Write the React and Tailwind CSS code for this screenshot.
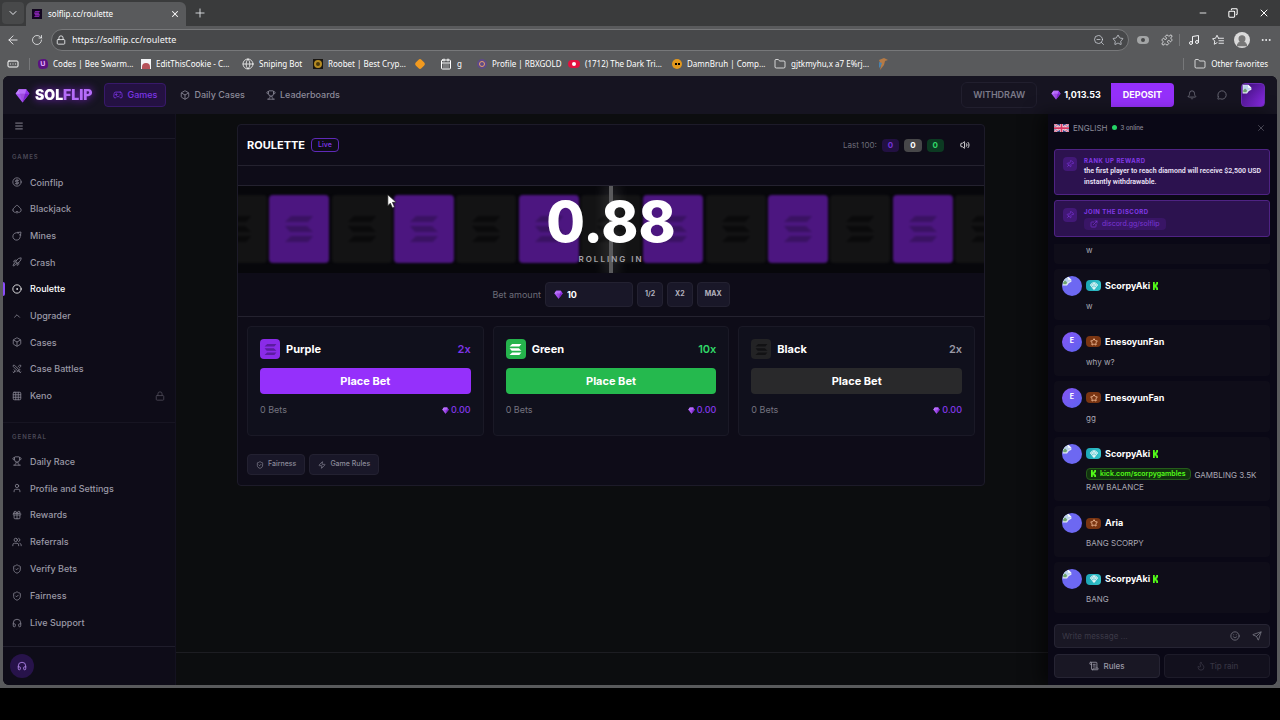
import React from "react";
import {
  ArrowLeft, RotateCw, Lock, ChevronDown, Plus, X, Minus, Copy, ZoomOut, Star, Puzzle, Music, Ellipsis,
  Globe, Folder, Gamepad2, Box, Trophy, Bell, MessageCircle, Menu, CircleDollarSign, Spade, Rocket,
  CircleDot, ChevronUp, Swords, Grid3x3, User, Gift, Users, ShieldCheck, Headphones, Volume2, Zap,
  Smile, Send, ScrollText, Flame, Pin, ExternalLink, Gem, UserRound, CalendarDays, RectangleEllipsis,
} from "lucide-react";

function GemMark({ className }) {
  return (
    <svg viewBox="0 0 24 24" className={className} aria-hidden="true">
      <path d="M6 2h12l5 7-11 14L1 9z" fill="#a855f7" />
      <path d="M6 2l2 7H1z" fill="#c084fc" />
      <path d="M18 2l-2 7h7z" fill="#9333ea" />
      <path d="M6 2h12l-2 7H8z" fill="#b76cf9" />
      <path d="M8 9h8l-4 14z" fill="#9d4edd" />
      <path d="M16 9h7L12 23z" fill="#7e22ce" />
    </svg>
  );
}

function Bars({ className }) {
  return (
    <svg viewBox="0 0 28 26" className={className} fill="currentColor" aria-hidden="true">
      <path d="M6 0h22l-5 6H0z" />
      <path d="M0 10h22l6 6H5z" />
      <path d="M6 20h22l-5 6H0z" />
    </svg>
  );
}

function Mine({ className, strokeWidth }) {
  return (
    <svg viewBox="0 0 24 24" className={className} fill="none" stroke="currentColor" strokeWidth={strokeWidth} strokeLinecap="round" strokeLinejoin="round" aria-hidden="true">
      <path d="M14.500 4.600A9 9 0 1 0 19.400 9.500" />
      <path d="M14 3.500 21.500 2.500 20.500 10" />
      <path d="M14 3.500l2 1.500M20.500 10l-1.500-2" />
    </svg>
  );
}

function StarList({ className }) {
  return (
    <svg viewBox="0 0 24 24" className={className} fill="none" stroke="currentColor" strokeWidth="1.800" strokeLinecap="round" strokeLinejoin="round" aria-hidden="true">
      <path d="M13 8.500 10 2.500 7 8.500l-6 1 4.500 4.500-1 6.500L10 17.500" />
      <path d="M13 8.500h10M14 13.500h9M14 18.500h9" />
    </svg>
  );
}

function BrokenImage({ className }) {
  return (
    <svg viewBox="0 0 16 16" className={className} aria-hidden="true">
      <path d="M1 1h9l5 5v3l-4 2-3 4H1z" fill="#e8edf5" />
      <path d="M2 2h8v3h4v3l-4 2-2 3H2z" fill="#bcd2ee" />
      <path d="M2 13V10l3-3 3 3-1 3z" fill="#6fa66a" />
      <path d="M10 1v5h5z" fill="#ffffff" />
    </svg>
  );
}

function Kick({ className }) {
  return (
    <svg viewBox="0 0 14 16" className={className} fill="#53fc18" preserveAspectRatio="none" aria-hidden="true">
      <path d="M0 0h5v5h2V3h2V0h5v5h-2v2h-2v2h2v2h2v5H9v-3H7v-2H5v5H0z" />
    </svg>
  );
}

function Flag({ className }) {
  return (
    <svg viewBox="0 0 30 16" className={className} aria-hidden="true">
      <rect width="30" height="16" fill="#3b4a8c" />
      <path d="M0 0l30 16M30 0L0 16" stroke="#f1dfe8" strokeWidth="4" />
      <path d="M0 0l30 16M30 0L0 16" stroke="#d8345f" strokeWidth="1.500" />
      <path d="M15 0v16M0 8h30" stroke="#f1dfe8" strokeWidth="6" />
      <path d="M15 0v16M0 8h30" stroke="#d8345f" strokeWidth="3.500" />
    </svg>
  );
}

function Divider() {
  return <span className="h-3 w-px bg-[#77787a]" />;
}

function TabStrip() {
  return (
    <div className="flex h-[26px] items-end bg-[#3a3b3c] pr-1">
      <button aria-label="Tab list" className="mb-0.5 ml-0.5 flex h-[22px] w-[22px] items-center justify-center rounded bg-[#48494a] text-gray-200">
        <ChevronDown className="size-3" strokeWidth={2} />
      </button>
      <div className="ml-0.5 flex h-6 w-40 items-center rounded-t-md bg-[#595a5c] px-1.5 text-white">
        <span className="flex size-2.5 items-center justify-center bg-[#12061f] text-[#a32bd6]">
          <Bars className="size-1.5" />
        </span>
        <span className="ml-1.5 text-[8px]">solflip.cc/roulette</span>
        <button aria-label="Close tab" className="ml-auto">
          <X className="size-2.5" strokeWidth={2.5} />
        </button>
      </div>
      <button aria-label="New tab" className="mb-1.5 ml-[7px] text-gray-200">
        <Plus className="size-3.5" strokeWidth={1.5} />
      </button>
      <div className="mb-[7px] ml-auto flex items-center gap-5 pr-1.5 text-white">
        <button aria-label="Minimize"><Minus className="size-2.5" strokeWidth={2} /></button>
        <button aria-label="Restore"><Copy className="size-2.5 -scale-x-100" strokeWidth={2.5} /></button>
        <button aria-label="Close window"><X className="size-3" strokeWidth={2} /></button>
      </div>
    </div>
  );
}

function Toolbar() {
  return (
    <div className="flex h-7 items-center bg-[#595a5c] pl-1.5 pr-2 text-gray-100">
      <button aria-label="Back"><ArrowLeft className="size-3.5" strokeWidth={1.5} /></button>
      <button aria-label="Reload" className="ml-[11px]"><RotateCw className="size-3" strokeWidth={1.5} /></button>
      <div className="ml-2 flex h-[22px] flex-1 items-center rounded-full border border-[#77787a] bg-[#47484a] px-1">
        <Lock className="size-2.5" strokeWidth={2} />
        <input aria-label="Address" defaultValue="https://solflip.cc/roulette" className="ml-1.5 min-w-0 flex-1 bg-transparent text-[9px] text-gray-100 outline-none" />
        <ZoomOut className="size-3 text-gray-300" strokeWidth={1.5} />
        <Star className="ml-[7px] size-3 text-gray-300" strokeWidth={1.5} />
      </div>
      <span className="ml-2 flex h-2 w-3 items-center rounded-full bg-[#a3a5a6] px-1"><span className="size-1 rounded-full bg-[#47484a]" /></span>
      <button aria-label="Extensions" className="ml-3"><Puzzle className="size-3" strokeWidth={1.5} /></button>
      <span className="ml-1.5 mr-2 flex"><Divider /></span>
      <button aria-label="Media"><Music className="size-3" strokeWidth={2} /></button>
      <button aria-label="Favorites" className="ml-3"><StarList className="size-3" /></button>
      <span className="ml-2.5 flex size-4 items-end justify-center overflow-hidden rounded-full bg-[#dadada] text-[#777]"><UserRound className="size-3.5" fill="currentColor" /></span>
      <button aria-label="Settings" className="ml-2.5"><Ellipsis className="size-3" strokeWidth={2} /></button>
    </div>
  );
}

function Bookmark({ icon, label, className }) {
  return (
    <a href="#" className={`flex shrink-0 items-center gap-[5px] whitespace-nowrap ${className}`}>
      {icon}
      {label && <span>{label}</span>}
    </a>
  );
}

function Bookmarks() {
  return (
    <div className="flex h-[22px] items-center bg-[#595a5c] pb-0.5 pl-[7px] pr-3 text-[8px] text-white">
      <RectangleEllipsis className="size-3" strokeWidth={2} />
      <span className="ml-2.5 flex"><Divider /></span>
      <Bookmark className="ml-2 w-[103px]" label="Codes | Bee Swarm..." icon={<span className="flex size-2.5 -rotate-6 items-center justify-center rounded-sm bg-[#5b1182] text-[7px] font-bold text-[#e6b2ff]">U</span>} />
      <Bookmark className="w-[101px]" label="EditThisCookie - C..." icon={<span className="flex size-2.5 items-end justify-center bg-gray-100"><span className="h-1.5 w-2 rounded-t-full bg-[#b5525a]" /></span>} />
      <Bookmark className="w-[71px]" label="Sniping Bot" icon={<Globe className="size-3" strokeWidth={1.5} />} />
      <Bookmark className="w-[103px]" label="Roobet | Best Cryp..." icon={<span className="flex size-2.5 items-center justify-center bg-[#191611]"><span className="size-2 rounded-full border-2 border-[#b58b22] bg-[#4a390b]" /></span>} />
      <Bookmark className="w-6" icon={<span className="size-2 rotate-45 rounded-xs bg-[#f29a1f]" />} />
      <Bookmark className="w-[37px]" label="g" icon={<CalendarDays className="size-3" strokeWidth={2} />} />
      <Bookmark className="w-[91px]" label="Profile | RBXGOLD" icon={<span className="flex size-2.5 items-center justify-center rounded-full bg-[#5d4a86]"><span className="size-1.5 rounded-full border border-[#e9a06c]" /></span>} />
      <Bookmark className="w-[104px]" label="(1712) The Dark Tri..." icon={<span className="flex h-2 w-3 items-center justify-center rounded-sm bg-[#e3113f]"><span className="size-1 rounded-full bg-white" /></span>} />
      <Bookmark className="w-[102px]" label="DamnBruh | Comp..." icon={<span className="flex size-2.5 items-center justify-center gap-px rounded-full bg-[#e3981d]"><span className="size-0.5 bg-black" /><span className="size-0.5 bg-black" /></span>} />
      <Bookmark className="w-[103px]" label="gjtkmyhu,x a7 E%rj..." icon={<Folder className="size-3" strokeWidth={1.5} />} />
      <svg viewBox="0 0 12 14" className="h-3.5 w-3" aria-hidden="true">
        <path d="M2 3l5-2 4 2-3 1-1 4-4 5 1-5z" fill="#b57a45" />
        <path d="M2 5l3 1-2 5-1-1z" fill="#4a82ad" />
      </svg>
      <span className="ml-auto flex"><Divider /></span>
      <Bookmark className="ml-2.5" label="Other favorites" icon={<Folder className="size-3" strokeWidth={1.5} />} />
    </div>
  );
}

function SiteHeader() {
  return (
    <header className="flex h-[38px] shrink-0 items-center bg-[#161421] px-3">
      <a href="#" className="flex items-center gap-[5px] text-sm font-black leading-4 text-white">
        <GemMark className="size-[15px]" />
        <span className="drop-shadow-[0_0_4px_#7e22ce]">SOL<span className="text-[#b46cf8]">FLIP</span></span>
      </a>
      <nav className="ml-3 flex items-center text-[9px] font-medium text-[#8b8a99]">
        <a href="#" className="flex h-6 items-center gap-1 rounded border border-[#38196a] bg-[#241142] px-2 text-[#7c35e6]">
          <Gamepad2 className="size-2.5" /> Games
        </a>
        <a href="#" className="ml-3.5 flex items-center gap-1"><Box className="size-2.5" /> Daily Cases</a>
        <a href="#" className="ml-[21px] flex items-center gap-1"><Trophy className="size-2.5" /> Leaderboards</a>
      </nav>
      <button className="ml-auto h-[26px] rounded-md border border-[#211f2e] px-[11px] text-[9px] font-semibold text-[#7b7a88]">WITHDRAW</button>
      <div className="ml-3.5 flex items-center gap-[3px] text-[9px] font-bold text-white">
        <GemMark className="size-[10px]" /> 1,013.53
      </div>
      <button className="ml-2.5 h-6 rounded-r bg-[#9530fb] px-3 text-[9px] font-bold text-white">DEPOSIT</button>
      <button aria-label="Notifications" className="ml-[13px] text-[#74737f]"><Bell className="size-2.5" /></button>
      <button aria-label="Chat" className="ml-5 text-[#74737f]"><MessageCircle className="size-2.5" /></button>
      <button aria-label="Account" className="ml-3.5 flex size-6 items-start rounded border border-[#6b2cb5] bg-linear-to-br from-[#3b0f74] to-[#8c2be8]">
        <BrokenImage className="size-2.5" />
      </button>
    </header>
  );
}

const games = [
  ["Coinflip", CircleDollarSign], ["Blackjack", Spade], ["Mines", Mine], ["Crash", Rocket],
  ["Roulette", CircleDot], ["Upgrader", ChevronUp], ["Cases", Box], ["Case Battles", Swords], ["Keno", Grid3x3],
];
const general = [
  ["Daily Race", Trophy], ["Profile and Settings", User], ["Rewards", Gift], ["Referrals", Users],
  ["Verify Bets", ShieldCheck], ["Fairness", ShieldCheck], ["Live Support", Headphones],
];

function NavLink({ label, Icon, active }) {
  return (
    <a href="#" className={`flex items-center text-[9px] font-medium ${active ? "text-white" : "text-[#9a99a6]"}`}>
      <span className={`h-3.5 w-0.5 rounded-r ${active ? "bg-[#8a4bfa]" : ""}`} />
      <Icon className={`ml-[7px] size-2.5 ${active ? "text-white" : "text-[#858491]"}`} strokeWidth={2} />
      <span className="ml-2">{label}</span>
      {label === "Keno" && <Lock className="ml-auto mr-2.5 size-2.5 text-[#4d4b58]" />}
    </a>
  );
}

function Sidebar() {
  return (
    <aside className="flex w-[173px] shrink-0 flex-col border-r border-[#141220] bg-[#0e0c18]">
      <div className="flex h-[25px] items-center border-b border-[#1c1a28] pl-[11px] text-[#a09fab]">
        <button aria-label="Toggle menu"><Menu className="size-2.5" /></button>
      </div>
      <h2 className="mt-3.5 pl-[9px] text-[6px] font-semibold leading-2 tracking-[1px] text-[#4b4956]">GAMES</h2>
      <nav className="mt-2 grid h-60 auto-rows-fr">
        {games.map(([l, I]) => <NavLink key={l} label={l} Icon={I} active={l === "Roulette"} />)}
      </nav>
      <h2 className="mt-[13px] border-t border-[#171522] pl-[9px] pt-2.5 text-[6px] font-semibold leading-2 tracking-[1px] text-[#4b4956]">GENERAL</h2>
      <nav className="mt-[7px] grid h-[188px] auto-rows-fr">
        {general.map(([l, I]) => <NavLink key={l} label={l} Icon={I} />)}
      </nav>
      <div className="mt-auto flex h-[39px] items-center border-t border-[#1f1d2b] pl-[7px]">
        <button aria-label="Support" className="flex size-6 items-center justify-center rounded-full bg-[#27134a] text-[#b78cf2]">
          <Headphones className="size-2.5" />
        </button>
      </div>
    </aside>
  );
}

function Reel() {
  const tiles = Array.from({ length: 13 }, (_, i) => i % 2 === 1);
  return (
    <div className="relative overflow-hidden border-t border-[#24222f] bg-[#07070b] pb-2.5 pt-[9px]">
      <div className="-mx-[31px] flex justify-between blur-[1px]">
        {tiles.map((purple, i) => (
          <div key={i} className={`flex h-[68px] w-[60px] shrink-0 items-center justify-center rounded-sm ${purple ? "bg-[#4c1680] text-[#3a1263]" : "bg-[#131314] text-[#0a0a0b]"}`}>
            <Bars className="h-[26px] w-7" />
          </div>
        ))}
      </div>
      <div className="absolute inset-0 flex justify-center"><span className="w-1 bg-[#5a5a5c] shadow-[0_0_14px_4px_rgba(255,255,255,0.12)]" /></div>
      <div className="absolute inset-0 flex flex-col items-center pt-2 text-white">
        <span className="text-[56px] font-extrabold leading-[56px]">0.88</span>
        <span className="mt-1 text-[8px] font-semibold leading-2.5 tracking-[2px] text-[#a3a2a8]">ROLLING IN</span>
      </div>
    </div>
  );
}

const bets = [
  { name: "Purple", mult: "2x", tone: "text-[#7e35e8]", button: "bg-[#9530fb]", icon: "bg-[#8a2be8] text-[#5b1ba0]" },
  { name: "Green", mult: "10x", tone: "text-[#31d768]", button: "bg-[#25b94e]", icon: "bg-[#25b34c] text-white" },
  { name: "Black", mult: "2x", tone: "text-[#9a99a6]", button: "bg-[#29292b]", icon: "bg-[#232325] text-[#121214]" },
];

function BetCard({ name, mult, tone, button, icon }) {
  return (
    <section className="rounded border border-[#1a1926] bg-[#10101c] px-3 pb-[17px] pt-3">
      <div className="flex items-center">
        <span className={`flex size-5 items-center justify-center rounded ${icon}`}><Bars className="h-[11px] w-[13px]" /></span>
        <h3 className="ml-1.5 text-[11px] font-bold leading-5 text-white">{name}</h3>
        <span className={`ml-auto text-[11px] font-semibold ${tone}`}>{mult}</span>
      </div>
      <button className={`mt-[9px] h-[26px] w-full rounded text-[11px] font-bold text-white ${button}`}>Place Bet</button>
      <div className="mt-2 flex items-center text-[9px] leading-4 text-[#74737f]">
        <span>0 Bets</span>
        <span className="ml-auto flex items-center gap-0.5 font-medium text-[#8438ec]"><GemMark className="size-[7px]" /> 0.00</span>
      </div>
    </section>
  );
}

function Roulette() {
  const small = "h-[25px] rounded border border-[#232131] bg-[#191728] px-[7px] text-[7px] font-bold text-[#b3b2be]";
  const chip = "flex h-[21px] items-center gap-1 rounded border border-[#232131] bg-[#191728] px-2";
  return (
    <section className="mx-auto max-w-[748px] rounded-sm border border-[#1d1b29] bg-[#0e0c18]">
      <div className="flex h-[41px] items-center border-b border-[#24222f] px-[9px]">
        <h1 className="text-[11px] font-bold text-white">ROULETTE</h1>
        <span className="ml-1.5 rounded-sm border border-[#5f2ab8] px-1.5 text-[7px] font-medium leading-3 text-[#8238ec]">Live</span>
        <div className="ml-auto flex items-center gap-[5px] text-[8px] font-bold leading-[13px]">
          <span className="font-normal text-[#6d6c78]">Last 100:</span>
          <span className="rounded bg-[#221042] px-1.5 text-[#7432d8]">0</span>
          <span className="rounded bg-[#474749] px-1.5 text-white">0</span>
          <span className="rounded bg-[#0c3a22] px-1.5 text-[#31d768]">0</span>
        </div>
        <button aria-label="Sound" className="ml-4 mr-[5px] text-white"><Volume2 className="size-2.5" /></button>
      </div>
      <div className="h-[19px]" />
      <Reel />
      <div className="flex h-11 items-center justify-center gap-1 border-b border-[#24222f]">
        <label htmlFor="bet" className="text-[9px] text-[#6d6c78]">Bet amount</label>
        <div className="flex h-[25px] w-[88px] items-center rounded border border-[#232131] bg-[#191728] pl-2">
          <GemMark className="size-[9px]" />
          <input id="bet" defaultValue="10" className="ml-1 w-14 bg-transparent text-[9px] font-bold text-white outline-none" />
        </div>
        <button className={small}>1/2</button>
        <button className={small}>X2</button>
        <button className={small}>MAX</button>
      </div>
      <div className="grid grid-cols-3 gap-[9px] px-[9px] pt-[9px]">
        {bets.map((b) => <BetCard key={b.name} {...b} />)}
      </div>
      <div className="flex gap-1 px-[9px] pb-2.5 pt-[18px] text-[7px] font-medium text-[#8b8a99]">
        <button className={chip}><ShieldCheck className="size-2" /> Fairness</button>
        <button className={chip}><Zap className="size-2" /> Game Rules</button>
      </div>
    </section>
  );
}

function Notice({ title, children }) {
  return (
    <section className="flex gap-[7px] rounded-[3px] border border-[#4f2384] bg-[#2c124f] pb-1.5 pl-2 pr-1 pt-[7px]">
      <span className="flex size-3.5 shrink-0 items-center justify-center rounded bg-[#421877] text-[#8339e0]"><Pin className="size-2 rotate-45" /></span>
      <div className="min-w-0">
        <h2 className="text-[6px] font-bold leading-2 tracking-[0.5px] text-[#8339e8]">{title}</h2>
        {children}
      </div>
    </section>
  );
}

function Message({ name, text, rank, avatar, kick, children }) {
  return (
    <article className="shrink-0 rounded bg-[#0f0d19] px-2 pb-[7px] pt-[7px]">
      <div className="flex items-center">
        {avatar ? (
          <span className="flex size-5 items-center justify-center rounded-full bg-linear-to-br from-[#8554f5] to-[#5a63ee] text-[7px] font-bold text-white">{avatar}</span>
        ) : (
          <span className="flex size-5 items-start overflow-hidden rounded-full bg-[#6d68f2]"><BrokenImage className="size-2.5" /></span>
        )}
        {rank === "gem" ? (
          <span className="ml-1 flex h-[11px] w-[15px] items-center justify-center rounded-sm bg-linear-to-r from-[#1ba5b5] to-[#35c5cc] text-white"><Gem className="size-2" strokeWidth={2.5} /></span>
        ) : (
          <span className="ml-1 flex h-[11px] w-[15px] items-center justify-center rounded-sm bg-[#7a3512] text-[#ffc9a3]"><Star className="size-2" strokeWidth={2.5} /></span>
        )}
        <span className="ml-1 text-[9px] font-bold text-white">{name}</span>
        {kick && <Kick className="ml-[3px] h-2 w-[5px]" />}
      </div>
      <p className="ml-6 mt-1 text-[8px] leading-[13px] text-[#a9a8b4]">{children || text}</p>
    </article>
  );
}

function Chat() {
  return (
    <aside className="flex w-[229px] shrink-0 flex-col bg-[#0a0816] pb-[7px] pl-1.5 pr-[7px] shadow-[-8px_0_16px_rgba(0,0,0,0.5)]">
      <div className="flex h-[27px] items-center text-[8px] text-[#8b8a99]">
        <Flag className="h-2 w-[15px]" />
        <button className="ml-1">ENGLISH</button>
        <span className="ml-1 size-[5px] rounded-full bg-[#25d366]" />
        <span className="ml-1 text-[6px] font-medium">3 online</span>
        <button aria-label="Close chat" className="ml-auto mr-1 text-[#6d6c78]"><X className="size-2.5" strokeWidth={1.5} /></button>
      </div>
      <div className="mt-2 flex flex-col gap-[5px]">
        <Notice title="RANK UP REWARD">
          <p className="mt-px font-['Roboto',sans-serif] text-[7px] font-semibold leading-[11px] text-[#ebe3f7]">the first player to reach diamond will receive $2,500 USD instantly withdrawable.</p>
        </Notice>
        <Notice title="JOIN THE DISCORD">
          <a href="#" className="mt-0.5 flex w-fit items-center gap-1 rounded bg-[#391566] px-1.5 text-[7px] leading-3 text-[#7c35d8]"><ExternalLink className="size-2" /> discord.gg/solflip</a>
        </Notice>
      </div>
      <div className="mt-1.5 flex min-h-0 flex-1 flex-col justify-end gap-[5px] overflow-hidden">
        <article className="rounded-b bg-[#0f0d19] px-2 pb-[7px]">
          <p className="ml-6 text-[8px] leading-[13px] text-[#a9a8b4]">w</p>
        </article>
        <Message name="ScorpyAki" rank="gem" kick text="w" />
        <Message name="EnesoyunFan" avatar="E" text="why w?" />
        <Message name="EnesoyunFan" avatar="E" text="gg" />
        <Message name="ScorpyAki" rank="gem" kick>
          <a href="#" className="mr-1 inline-flex items-center gap-1 rounded-sm border border-[#255c1a] bg-[#12330f] px-1 text-[7px] font-semibold leading-[10px] text-[#53fc18]"><Kick className="h-[7px] w-[5px]" /> kick.com/scorpygambles</a>
          GAMBLING 3.5K RAW BALANCE
        </Message>
        <Message name="Aria" text="BANG SCORPY" />
        <Message name="ScorpyAki" rank="gem" kick text="BANG" />
      </div>
      <div className="mt-[11px] flex h-6 items-center rounded-sm border border-[#262433] bg-[#191724] px-[7px] text-[#74737f]">
        <input aria-label="Message" placeholder="Write message ..." className="min-w-0 flex-1 bg-transparent text-[8px] outline-none placeholder:text-[#3c3a48]" />
        <button aria-label="Emoji"><Smile className="size-2.5" /></button>
        <button aria-label="Send" className="ml-3"><Send className="size-2.5" /></button>
      </div>
      <div className="mt-1.5 grid grid-cols-2 gap-1 text-[8px] font-medium">
        <button className="flex h-6 items-center justify-center gap-1 rounded-sm border border-[#262433] bg-[#191724] text-[#9a99a6]"><ScrollText className="size-2.5" /> Rules</button>
        <button disabled className="flex h-6 items-center justify-center gap-1 rounded-sm border border-[#1d1b29] bg-[#12101d] text-[#363442]"><Flame className="size-2.5" /> Tip rain</button>
      </div>
    </aside>
  );
}

export default function App() {
  return (
    <div className="relative flex h-screen flex-col bg-black pb-8 font-['Inter',sans-serif]">
      <div className="font-['Noto_Sans',sans-serif]">
        <TabStrip />
        <Toolbar />
        <Bookmarks />
      </div>
      <div className="flex min-h-0 flex-1 bg-[#595a5c] px-[3px] pb-[3px]">
        <div className="flex min-w-0 flex-1 flex-col overflow-hidden rounded-md bg-[#0c0d0f]">
          <SiteHeader />
          <div className="flex min-h-0 flex-1">
            <Sidebar />
            <div className="flex min-w-0 flex-1 flex-col">
              <main className="flex-1 pl-[30px] pr-8 pt-2.5"><Roulette /></main>
              <footer className="h-[33px] border-t border-[#1d1d22]" />
            </div>
            <Chat />
          </div>
        </div>
      </div>
      <svg viewBox="0 0 12 18" className="absolute left-[387px] top-[194px] h-[15px] w-2.5" aria-hidden="true">
        <path d="M1 1v13l3-3 2.500 5.500 2.500-1-2.500-5.500H11z" fill="#fff" stroke="#222" strokeWidth="0.800" />
      </svg>
    </div>
  );
}
